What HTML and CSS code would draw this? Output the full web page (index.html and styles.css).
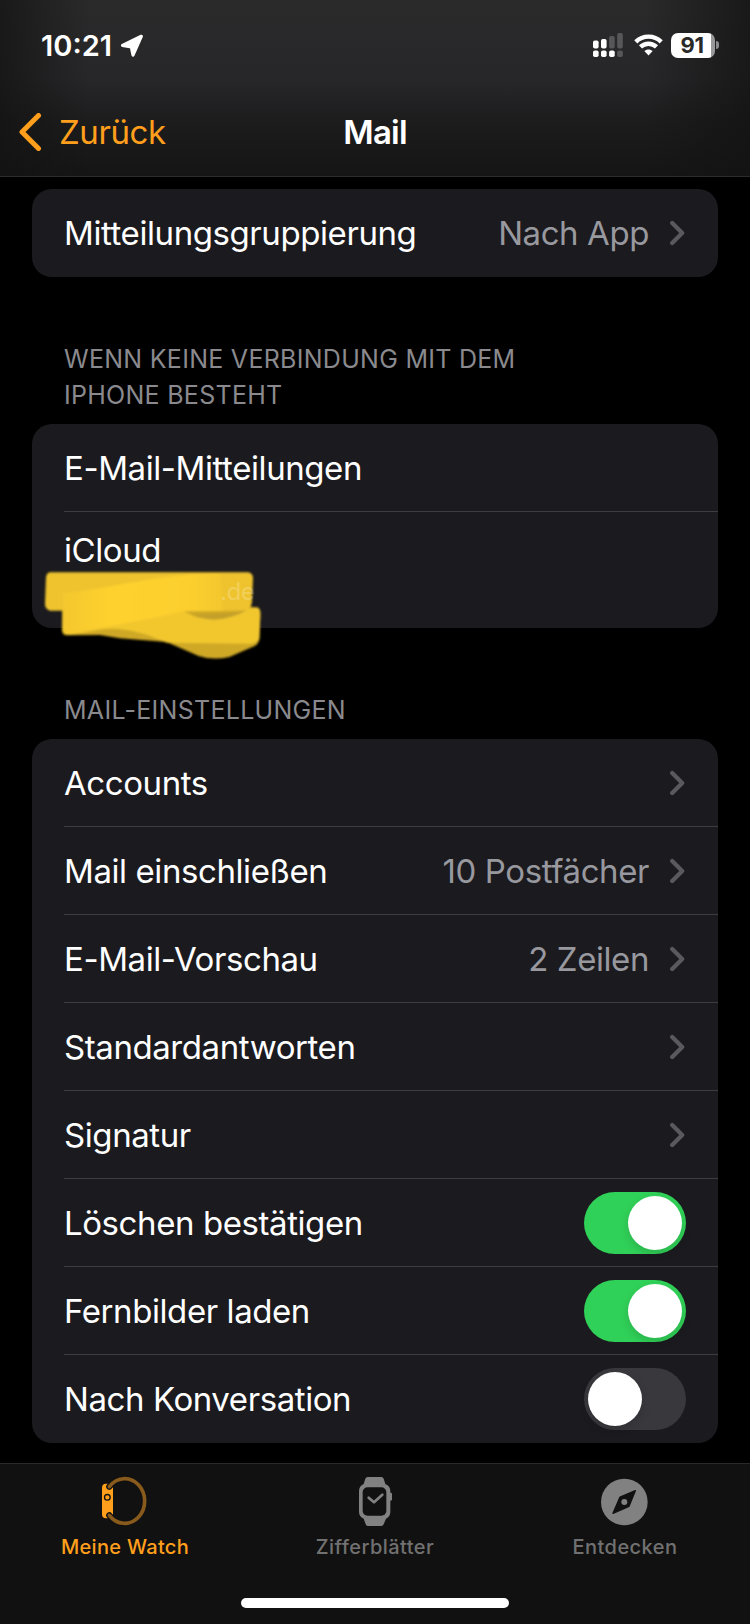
FILE: index.html
```
<!DOCTYPE html>
<html lang="de">

	<head>
		<meta charset="UTF-8">
		<title>Mail</title>
		<link rel="stylesheet" href="styles.css">
	</head>

	<body>
		<svg class="defs" width="0" height="0">
			<symbol id="chevron" viewBox="0 0 15 26">
				<path d="M2.2 3 L12.2 13 L2.2 23" fill="none" stroke="currentColor" stroke-width="4.2" stroke-linecap="round" stroke-linejoin="round"/>
			</symbol>
		</svg>

		<header class="top">
			<div class="status">
				<span class="time">10:21</span>
				<svg class="location" width="24" height="24" viewBox="0 0 24 24">
					<path d="M21.3 2.3 L13 21 L11.3 13 L2.5 11.4 Z" fill="#fff" stroke="#fff" stroke-width="3.2" stroke-linejoin="round"/>
				</svg>
				<div class="status-right">
					<svg width="30" height="24" viewBox="0 0 30 24">
						<g fill="#fff">
							<rect x="0" y="7.5" width="5.6" height="8" rx="1.8"/>
							<rect x="8" y="6" width="5.6" height="9.5" rx="1.8"/>
							<rect x="0" y="17.5" width="5.6" height="6.5" rx="1.8"/>
							<rect x="8" y="17.5" width="5.6" height="6.5" rx="1.8"/>
							<rect x="16.1" y="17.5" width="5.6" height="6.5" rx="1.8"/>
						</g>
						<g fill="#57575a">
							<rect x="16.1" y="3" width="5.6" height="12.5" rx="1.8"/>
							<rect x="24.2" y="0" width="5.6" height="15.5" rx="1.8"/>
							<rect x="24.2" y="17.5" width="5.6" height="6.5" rx="1.8"/>
						</g>
					</svg>
					<svg class="wifi" width="29" height="22" viewBox="0 0 29 22">
						<g fill="none" stroke="#fff" stroke-width="4.4">
							<path d="M1.8 7.9 C8.8 .9 20.2 .9 27.2 7.9"/>
							<path d="M6.5 12.9 C11 8.6 18 8.6 22.5 12.9"/>
						</g>
						<path d="M10.3 17.1 C12.6 15 16.4 15 18.7 17.1 L14.5 21.4 Z" fill="#fff"/>
					</svg>
					<div class="battery"><span class="level">91</span></div>
				</div>
			</div>
			<div class="nav">
				<a href="javascript:" class="back">
					<svg width="24" height="38" viewBox="0 0 24 38">
						<path d="M20.5 2.5 L4 19 L20.5 35.5" fill="none" stroke="currentColor" stroke-width="5" stroke-linecap="round" stroke-linejoin="round"/>
					</svg>
					<span>Zurück</span>
				</a>
				<h1>Mail</h1>
			</div>
		</header>

		<main class="content">
			<ul class="card">
				<li class="row"><span class="label">Mitteilungsgruppierung</span><span class="value">Nach App</span><svg class="chevron"><use href="#chevron"/></svg></li>
			</ul>

			<h2>WENN KEINE VERBINDUNG MIT DEM<br>IPHONE BESTEHT</h2>
			<ul class="card">
				<li class="row"><span class="label">E-Mail-Mitteilungen</span></li>
				<li class="row account">
					<span class="label">iCloud</span>
					<!-- marker strokes over the address -->
					<svg class="marker" width="228" height="100" viewBox="60 435 684 300">
						<defs>
							<filter id="soft"><feGaussianBlur stdDeviation="3"/></filter>
							<linearGradient id="fade" x1="0" y1="0" x2="1" y2="0">
								<stop offset="0" stop-color="#f3c72e"/>
								<stop offset=".3" stop-color="#ffd12f"/>
								<stop offset=".8" stop-color="#fccf2f"/>
								<stop offset="1" stop-color="#f3c72e"/>
							</linearGradient>
						</defs>
						<g filter="url(#soft)">
							<path d="M126 560 L480 560 L690 560 Q722 560 721 575 L719 655 Q716 672 704 678 L628 711 Q580 722 536 708 L440 666 L300 655 L240 645 L140 646 Q124 645 126 625 Z" fill="#cfa826"/>
							<path d="M90 457 L685 457 Q699 460 699 475 L696 545 Q693 568 680 572 L90 572 Q74 568 75 550 L78 472 Q80 458 90 457 Z" fill="#eec32e"/>
							<path d="M130 560 L490 572 Q560 620 685 568 L712 562 Q722 566 721 590 L717 655 Q712 670 690 671 L440 668 C370 635 300 620 250 628 L150 644 Q124 644 127 620 Z" fill="#f2c72f"/>
							<path d="M128 520 C280 505 420 460 600 460 L610 573 L490 574 L400 594 L150 640 Q130 640 132 615 Z" fill="url(#fade)"/>
							<path d="M512 583 Q600 585 682 571 Q590 620 512 583 Z" fill="#c4a02a"/>
						</g>
					</svg>
					<span class="address">.de</span>
				</li>
			</ul>

			<h2>MAIL-EINSTELLUNGEN</h2>
			<ul class="card">
				<li class="row"><span class="label">Accounts</span><svg class="chevron"><use href="#chevron"/></svg></li>
				<li class="row"><span class="label">Mail einschließen</span><span class="value">10 Postfächer</span><svg class="chevron"><use href="#chevron"/></svg></li>
				<li class="row"><span class="label">E-Mail-Vorschau</span><span class="value">2 Zeilen</span><svg class="chevron"><use href="#chevron"/></svg></li>
				<li class="row"><span class="label">Standardantworten</span><svg class="chevron"><use href="#chevron"/></svg></li>
				<li class="row"><span class="label">Signatur</span><svg class="chevron"><use href="#chevron"/></svg></li>
				<li class="row"><span class="label">Löschen bestätigen</span><span class="switch on"></span></li>
				<li class="row"><span class="label">Fernbilder laden</span><span class="switch on"></span></li>
				<li class="row"><span class="label">Nach Konversation</span><span class="switch"></span></li>
			</ul>
		</main>

		<footer class="bottom">
			<nav class="tabs">
				<a href="javascript:" class="tab active">
					<svg width="56" height="56" viewBox="0 0 168 168">
						<rect x="15" y="29" width="33" height="104" rx="12" fill="#ff9f1c"/>
						<path d="M37 38 A60 67 0 1 1 37 124" fill="none" stroke="#111" stroke-width="19" stroke-linecap="round"/>
						<rect x="15" y="50" width="33" height="62" fill="#ff9f1c"/>
						<path d="M37 38 A60 67 0 1 1 37 124" fill="none" stroke="#885a1c" stroke-width="11" stroke-linecap="round"/>
						<circle cx="31" cy="70" r="8.5" fill="none" stroke="#111" stroke-width="4"/>
					</svg>
					<span>Meine Watch</span>
				</a>
				<a href="javascript:" class="tab">
					<svg width="56" height="56" viewBox="0 0 168 168">
						<g fill="#818181">
							<path d="M62 9 H103 Q108 9 110 14 L115 30 Q130 36 130 52 V113 Q130 128 117 134 L110 151 Q108 156 103 156 H62 Q58 156 56 151 L50 134 Q36 128 36 113 V52 Q36 36 50 30 L55 14 Q57 9 62 9 Z"/>
							<rect x="124" y="56" width="11" height="24" rx="4"/>
						</g>
						<rect x="47" y="40" width="71" height="85" rx="15" fill="#111"/>
						<path d="M65 71 L81 85 L106 62" fill="none" stroke="#818181" stroke-width="8" stroke-linecap="round" stroke-linejoin="round"/>
					</svg>
					<span>Zifferblätter</span>
				</a>
				<a href="javascript:" class="tab">
					<svg width="56" height="56" viewBox="0 0 168 168">
						<circle cx="82" cy="84" r="70" fill="#818181"/>
						<path d="M115 50 L69 69 L48 118 L96 97 Z" fill="#111" stroke="#111" stroke-width="4" stroke-linejoin="round"/>
						<circle cx="82" cy="84" r="9" fill="#818181"/>
					</svg>
					<span>Entdecken</span>
				</a>
			</nav>
			<div class="home"></div>
		</footer>
	</body>

</html>
```

FILE: styles.css
```
* {
	box-sizing: border-box;
}

body {
	display: flex;
	flex-direction: column;
	width: 750px;
	height: 1624px;
	margin: 0;
	overflow: hidden;
	background-color: #000;
	color: #fff;
	font-family: Inter, "Liberation Sans", sans-serif;
	font-size: 33px;
	letter-spacing: -.42px;
}

a {
	color: inherit;
	text-decoration: none;
}

svg {
	flex: none;
	display: block;
}

.defs {
	position: absolute;
}

.top {
	flex: none;
	height: 177px;
	border-bottom: 1px solid #2b2b2b;
	background: linear-gradient(90deg, rgba(18, 18, 18, .7), rgba(18, 18, 18, 0) 12%, rgba(18, 18, 18, 0) 86%, rgba(18, 18, 18, .7)), linear-gradient(#2a2a2b, #272729 45%, #1c1c1d 70%, #151515);
}

.status {
	display: flex;
	align-items: center;
	height: 90px;
	padding: 0 31px 0 41px;
}

.time {
	font-size: 29px;
	font-weight: 600;
	letter-spacing: 0;
}

.location {
	margin: 2px 0 0 8px;
}

.status-right {
	display: flex;
	align-items: center;
	margin-left: auto;
}

.wifi {
	margin: 0 8px 0 11px;
}

.battery {
	display: flex;
	align-items: center;
	width: 48px;
}

.battery::after {
	content: '';
	width: 3px;
	height: 8px;
	margin-left: 1px;
	border-radius: 0 3px 3px 0;
	background-color: #8c8c8e;
}

.level {
	width: 44px;
	height: 25px;
	padding-right: 2px;
	border-radius: 7px;
	background: linear-gradient(90deg, #fff 40px, #98989a 40px);
	color: #29292a;
	font-size: 22px;
	font-weight: 700;
	line-height: 25px;
	text-align: center;
}

.nav {
	display: grid;
	grid-template-columns: 1fr auto 1fr;
	align-items: center;
	height: 84px;
}

.back {
	display: flex;
	align-items: center;
	gap: 17px;
	padding-left: 18px;
	color: #ff9f1c;
}

h1 {
	margin: 0;
	font-size: 33px;
	font-weight: 600;
	letter-spacing: -.8px;
}

.content {
	flex: 1;
	padding: 12px 32px 0;
}

h2 {
	margin: 0;
	padding: 64px 32px 11px;
	color: #8a8a8e;
	font-size: 25px;
	font-weight: 400;
	letter-spacing: .28px;
	line-height: 36px;
}

.card {
	margin: 0;
	padding: 0;
	border-radius: 20px;
	background-color: #1b1a1e;
	list-style: none;
}

.row {
	position: relative;
	display: flex;
	align-items: center;
	height: 88px;
	padding: 0 32px;
}

.row:not(:last-child)::after {
	content: '';
	position: absolute;
	left: 32px;
	right: 0;
	bottom: 0;
	height: 1px;
	background-color: #3d3d40;
}

.label {
	flex: 1;
}

.value {
	color: #98989f;
}

.chevron {
	width: 15px;
	height: 26px;
	margin: 0 1px 0 21px;
	color: #5a5a5e;
}

.account {
	align-items: flex-start;
	height: 116px;
	padding-top: 18px;
}

.marker {
	position: absolute;
	left: 8px;
	top: 53px;
}

.address {
	position: absolute;
	left: 188px;
	top: 65px;
	font-size: 24px;
	opacity: .2;
}

.switch {
	width: 102px;
	height: 62px;
	padding: 4px;
	border-radius: 31px;
	background-color: #39383d;
}

.switch::before {
	content: '';
	display: block;
	width: 54px;
	height: 54px;
	border-radius: 50%;
	background-color: #fff;
	box-shadow: 0 4px 10px rgba(0, 0, 0, .15);
}

.switch.on {
	background-color: #30d158;
}

.switch.on::before {
	margin-left: auto;
}

.bottom {
	flex: none;
	height: 161px;
	border-top: 1px solid #2a2a2a;
	background-color: #111;
}

.tabs {
	display: grid;
	grid-template-columns: repeat(3, 1fr);
	height: 134px;
	padding-top: 10px;
}

.tab {
	display: flex;
	flex-direction: column;
	align-items: center;
	gap: 5px;
	color: #717171;
	font-size: 20px;
	font-weight: 500;
	letter-spacing: .45px;
}

.tab.active {
	color: #ff9f1c;
	letter-spacing: .3px;
}

.home {
	width: 268px;
	height: 10px;
	margin: 0 auto;
	border-radius: 5px;
	background-color: #fff;
}
```
